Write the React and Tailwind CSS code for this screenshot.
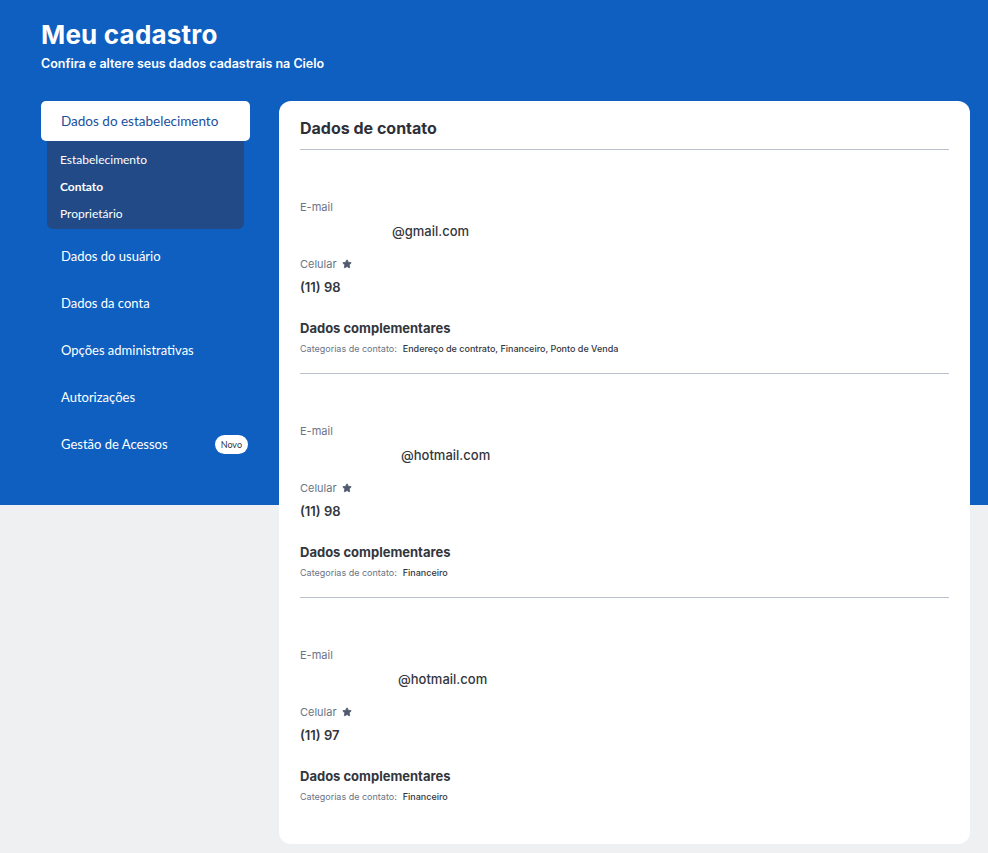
import { Star } from 'lucide-react';

const contacts = [
  { hidden: 92, domain: '@gmail.com', phone: '(11) 98', cats: 'Endereço de contrato, Financeiro, Ponto de Venda' },
  { hidden: 101, domain: '@hotmail.com', phone: '(11) 98', cats: 'Financeiro' },
  { hidden: 98, domain: '@hotmail.com', phone: '(11) 97', cats: 'Financeiro' },
];

const subItems = [
  { label: 'Estabelecimento', bold: false },
  { label: 'Contato', bold: true },
  { label: 'Proprietário', bold: false },
];

const menuItems = ['Dados do usuário', 'Dados da conta', 'Opções administrativas', 'Autorizações'];

const ContactBlock = ({ c, last }) => (
  <div className={`pt-[49px] pb-[17px] ${last ? '' : 'border-b border-[#b9c1cc]'}`}>
    <p className="text-[11px] text-[#6b7385] leading-[16px]">E-mail</p>
    <p className="mt-[7px] text-[13px] text-[#33363d] font-medium leading-[18px]">
      <span className="inline-block" style={{ width: c.hidden }} />
      {c.domain}
    </p>
    <div className="mt-[16px] flex items-center gap-[5px]">
      <span className="text-[11px] text-[#6b7385] leading-[16px]">Celular</span>
      <Star size={10} className="fill-[#4f5a6e] text-[#4f5a6e]" />
    </div>
    <p className="mt-[6px] text-[13px] text-[#33363d] font-semibold leading-[18px]">{c.phone}</p>
    <p className="mt-[23px] text-[13px] text-[#33363d] font-bold leading-[18px]">Dados complementares</p>
    <p className="mt-[5px] text-[9px] leading-[14px]">
      <span className="text-[#6b7385]">Categorias de contato:</span>
      <span className="ml-[6px] text-[#33363d] font-medium">{c.cats}</span>
    </p>
  </div>
);

export default function App() {
  return (
    <div className="min-h-[853px] bg-[#eff0f2] relative font-['Inter',sans-serif]">
      <div className="absolute inset-x-0 top-0 h-[505px] bg-[#0e5fc0]" />
      <div className="relative px-[41px] pt-[19px]">
        <h1 className="text-[26px] font-bold text-white leading-[32px] tracking-[0.2px]">Meu cadastro</h1>
        <p className="mt-[4px] text-[12.5px] font-semibold text-white leading-[18px]">Confira e altere seus dados cadastrais na Cielo</p>

        <div className="mt-[28px] flex gap-[29px] items-start">
          <aside className="w-[209px] shrink-0 font-['Lato',sans-serif]">
            <div className="h-[40px] bg-white rounded-[5px] flex items-center pl-[20px] text-[13.5px] text-[#1a4f9c]">
              Dados do estabelecimento
            </div>
            <div className="mx-[6px] bg-[#214a87] rounded-b-[6px] pt-[5px] pb-[2px]">
              {subItems.map((s) => (
                <div key={s.label} className={`h-[27px] flex items-center pl-[13px] text-[12px] text-white ${s.bold ? 'font-bold' : ''}`}>
                  {s.label}
                </div>
              ))}
            </div>
            <nav className="mt-[4px]">
              {menuItems.map((m) => (
                <div key={m} className="h-[47px] flex items-center pl-[20px] text-[13px] text-white">
                  {m}
                </div>
              ))}
              <div className="h-[47px] flex items-center justify-between pl-[20px] text-[13px] text-white">
                <span>Gestão de Acessos</span>
                <span className="h-[19px] px-[6px] mr-[2px] rounded-full bg-white text-[#33363d] text-[9px] flex items-center">Novo</span>
              </div>
            </nav>
          </aside>

          <main className="flex-1 mr-[-23px] bg-white rounded-[12px] px-[21px] pb-[23px]">
            <div className="h-[49px] flex items-center pt-[6px] border-b border-[#b9c1cc]">
              <h2 className="text-[16px] font-bold text-[#2d3038] leading-[20px]">Dados de contato</h2>
            </div>
            {contacts.map((c, i) => (
              <ContactBlock key={i} c={c} last={i === contacts.length - 1} />
            ))}
          </main>
        </div>
      </div>
    </div>
  );
}
